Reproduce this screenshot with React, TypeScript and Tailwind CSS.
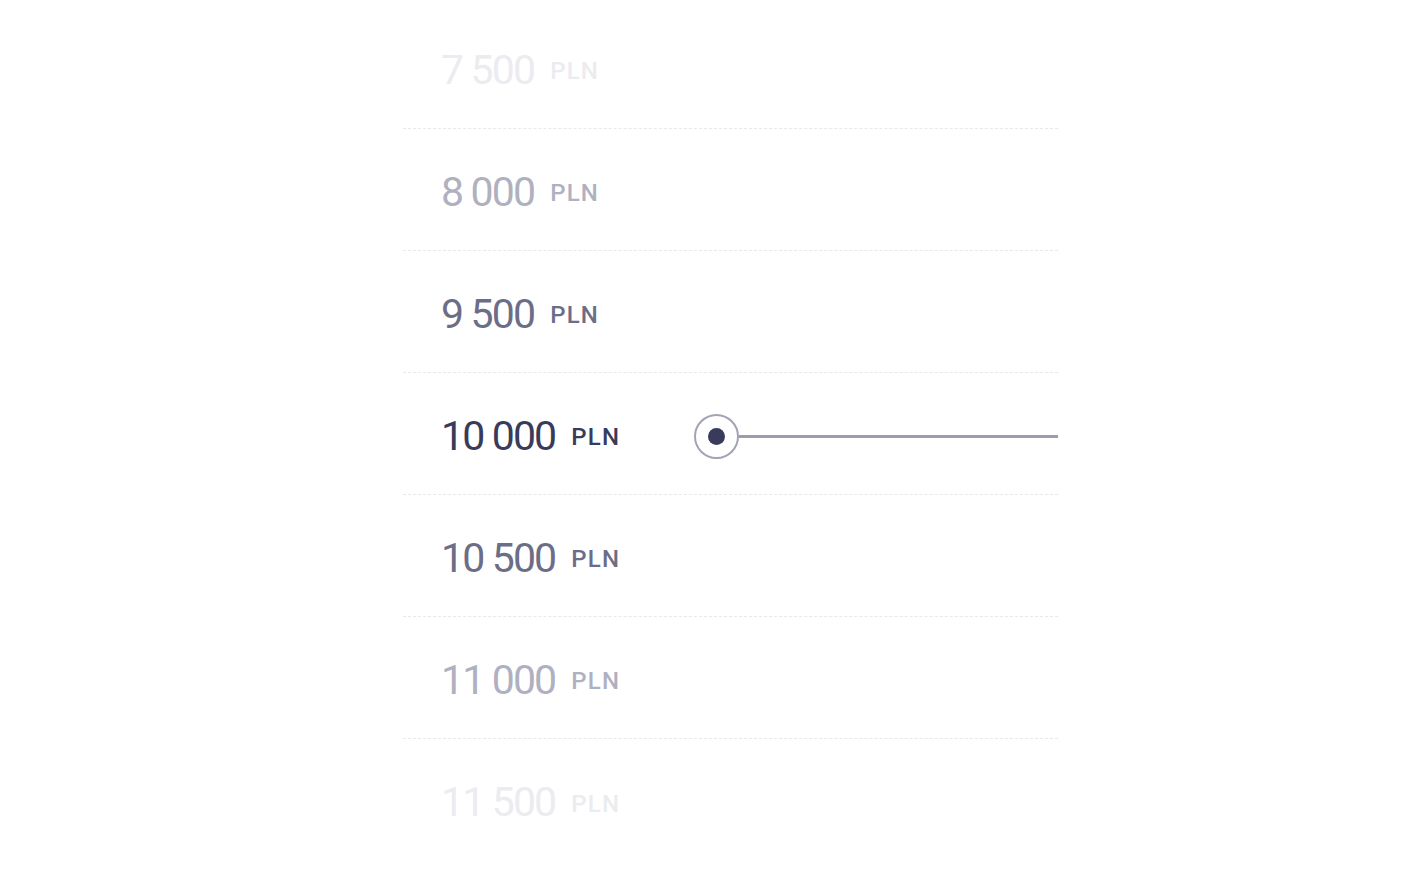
const rows = [
  { value: '7 500', tone: 'text-[#ebebf0]' },
  { value: '8 000', tone: 'text-[#afb0c0]' },
  { value: '9 500', tone: 'text-[#6c6e87]' },
  { value: '10 000', tone: 'text-[#383b5a]', active: true },
  { value: '10 500', tone: 'text-[#6c6e87]' },
  { value: '11 000', tone: 'text-[#afb0c0]' },
  { value: '11 500', tone: 'text-[#ebebf0]' }
]

function Slider() {
  return (
    <div className="flex flex-1 items-center">
      <div className="flex h-[45px] w-[45px] shrink-0 items-center justify-center rounded-full border-2 border-[#a3a3b3] bg-white">
        <div className="h-[17px] w-[17px] rounded-full bg-[#383b5a]" />
      </div>
      <div className="h-[3px] flex-1 bg-[#9c9cab]" />
    </div>
  )
}

export default function App() {
  return (
    <div className="flex min-h-[894px] w-full justify-center bg-white pt-[7px] font-['Roboto',sans-serif]">
      <div className="ml-[47px] flex w-[655px] flex-col">
        {rows.map((row, i) => (
          <div
            key={row.value}
            className={`flex h-[122px] items-center pl-[38px] pt-[5px] ${
              i < rows.length - 1 ? 'border-b border-dashed border-[#e8e8ec]' : ''
            }`}
          >
            <div className={`flex w-[253px] shrink-0 items-center gap-[16px] ${row.tone}`}>
              <span className="text-[41px] leading-none tracking-[-0.045em]">{row.value}</span>
              <span className="pt-[2px] text-[24px] font-medium leading-none tracking-[0.05em]">PLN</span>
            </div>
            {row.active && <Slider />}
          </div>
        ))}
      </div>
    </div>
  )
}
